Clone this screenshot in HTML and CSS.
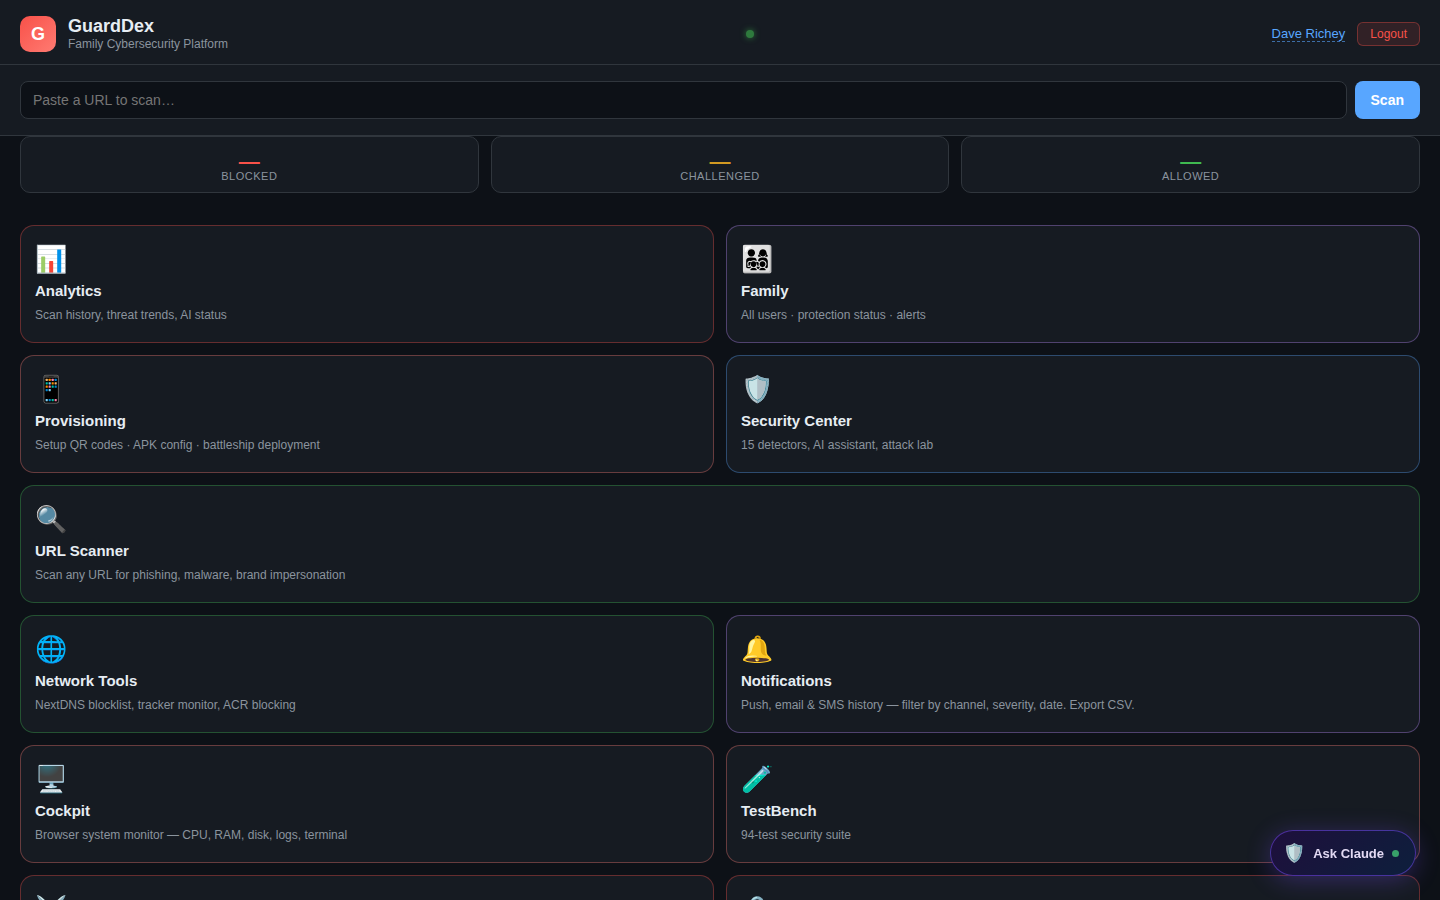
FILE: index.html
```html
<!DOCTYPE html>
<html lang="en">
<head>
    <meta charset="UTF-8">
    <meta name="viewport" content="width=device-width, initial-scale=1.0">
    <title>GuardDex</title>
    <link rel="stylesheet" href="styles.css">
</head>
<body>
    <header class="header">
        <div class="brand">
            <div class="logo">G</div>
            <div>
                <h1 class="brand-name">GuardDex</h1>
                <div class="brand-sub">Family Cybersecurity Platform</div>
            </div>
        </div>
        <span class="status-dot"></span>
        <div class="user">
            <a href="#" class="user-name">Dave Richey</a>
            <button type="button" class="logout">Logout</button>
        </div>
    </header>

    <form class="scan-bar">
        <input type="text" class="scan-input" placeholder="Paste a URL to scan…" aria-label="URL to scan">
        <button type="button" class="scan-btn">Scan</button>
    </form>

    <!-- Stats -->
    <section class="stats">
        <div class="stat">
            <div class="stat-num red">—</div>
            <div class="stat-label">Blocked</div>
        </div>
        <div class="stat">
            <div class="stat-num orange">—</div>
            <div class="stat-label">Challenged</div>
        </div>
        <div class="stat">
            <div class="stat-num green">—</div>
            <div class="stat-label">Allowed</div>
        </div>
    </section>

    <!-- Navigation cards -->
    <main class="grid">
        <a href="#" class="card card-red">
            <div class="card-icon">📊</div>
            <h2 class="card-title">Analytics</h2>
            <p class="card-desc">Scan history, threat trends, AI status</p>
        </a>
        <a href="#" class="card card-purple">
            <div class="card-icon">👨‍👩‍👧‍👦</div>
            <h2 class="card-title">Family</h2>
            <p class="card-desc">All users · protection status · alerts</p>
        </a>
        <a href="#" class="card card-coral">
            <div class="card-icon">📱</div>
            <h2 class="card-title">Provisioning</h2>
            <p class="card-desc">Setup QR codes · APK config · battleship deployment</p>
        </a>
        <a href="#" class="card card-blue">
            <div class="card-icon">🛡️</div>
            <h2 class="card-title">Security Center</h2>
            <p class="card-desc">15 detectors, AI assistant, attack lab</p>
        </a>
        <a href="#" class="card card-green card-wide">
            <div class="card-icon">🔍</div>
            <h2 class="card-title">URL Scanner</h2>
            <p class="card-desc">Scan any URL for phishing, malware, brand impersonation</p>
        </a>
        <a href="#" class="card card-green">
            <div class="card-icon">🌐</div>
            <h2 class="card-title">Network Tools</h2>
            <p class="card-desc">NextDNS blocklist, tracker monitor, ACR blocking</p>
        </a>
        <a href="#" class="card card-purple">
            <div class="card-icon">🔔</div>
            <h2 class="card-title">Notifications</h2>
            <p class="card-desc">Push, email &amp; SMS history — filter by channel, severity, date. Export CSV.</p>
        </a>
        <a href="#" class="card card-coral">
            <div class="card-icon">🖥️</div>
            <h2 class="card-title">Cockpit</h2>
            <p class="card-desc">Browser system monitor — CPU, RAM, disk, logs, terminal</p>
        </a>
        <a href="#" class="card card-coral">
            <div class="card-icon">🧪</div>
            <h2 class="card-title">TestBench</h2>
            <p class="card-desc">94-test security suite</p>
        </a>
        <a href="#" class="card card-red">
            <div class="card-icon">⚔️</div>
        </a>
        <a href="#" class="card card-red">
            <div class="card-icon">🔒</div>
        </a>
    </main>

    <button type="button" class="ask">
        <span class="ask-icon">🛡️</span>
        Ask Claude
        <span class="ask-dot"></span>
    </button>
</body>
</html>
```
FILE: styles.css
```css
:root {
    --bg: #0d1117;
    --card: #161b22;
    --border: #30363d;
    --text: #e6edf3;
    --muted: #8b949e;
    --red: #f85149;
    --orange: #d29922;
    --green: #3fb950;
    --blue: #58a6ff;
}

* {
    margin: 0;
    padding: 0;
    box-sizing: border-box;
}

body {
    height: 100vh;
    overflow: hidden;
    background: var(--bg);
    color: var(--text);
    font-family: "Liberation Sans", Arial, sans-serif;
}

button, input {
    font-family: inherit;
}

/* Header */
.header {
    display: flex;
    align-items: center;
    justify-content: space-between;
    padding: 16px 20px 12px;
    background: var(--card);
    border-bottom: 1px solid var(--border);
}

.brand {
    display: flex;
    align-items: center;
    gap: 12px;
}

.logo {
    display: flex;
    align-items: center;
    justify-content: center;
    width: 36px;
    height: 36px;
    border-radius: 10px;
    background: linear-gradient(135deg, #f85149, #ff7b72);
    color: #fff;
    font-size: 18px;
    font-weight: 700;
}

.brand-name {
    font-size: 18px;
    line-height: 20px;
}

.brand-sub {
    font-size: 12px;
    line-height: 16px;
    color: var(--muted);
}

.status-dot {
    width: 8px;
    height: 8px;
    border-radius: 50%;
    background: var(--green);
    box-shadow: 0 0 6px var(--green);
    opacity: 0.6;
}

.user {
    display: flex;
    align-items: center;
    gap: 12px;
}

.user-name {
    color: var(--blue);
    font-size: 13px;
    line-height: 15px;
    text-decoration: none;
    border-bottom: 1px dashed rgba(88,166,255,0.6);
}

.logout {
    height: 24px;
    padding: 0 12px;
    border: 1px solid rgba(248,81,73,0.35);
    border-radius: 6px;
    background: rgba(248,81,73,0.12);
    color: var(--red);
    font-size: 12px;
}

/* URL scan bar */
.scan-bar {
    display: flex;
    gap: 8px;
    padding: 16px 20px;
    background: var(--card);
    border-bottom: 1px solid var(--border);
}

.scan-input {
    flex: 1;
    min-width: 0;
    height: 38px;
    padding: 0 12px;
    border: 1px solid var(--border);
    border-radius: 8px;
    background: var(--bg);
    color: var(--text);
    font-size: 14px;
}

.scan-btn {
    padding: 0 16px;
    border: none;
    border-radius: 8px;
    background: var(--blue);
    color: #fff;
    font-size: 14px;
    font-weight: 600;
}

/* Stats */
.stats {
    display: grid;
    grid-template-columns: repeat(3, 1fr);
    gap: 12px;
    padding: 0 20px 32px;
}

.stat {
    padding: 14px 10px 10px;
    border: 1px solid var(--border);
    border-radius: 10px;
    background: var(--card);
    text-align: center;
}

.stat-num {
    font-size: 21px;
    line-height: 20px;
    font-weight: 700;
}

.stat-label {
    font-size: 11px;
    line-height: 11px;
    letter-spacing: 0.5px;
    text-transform: uppercase;
    color: var(--muted);
}

.red { color: var(--red); }
.orange { color: var(--orange); }
.green { color: var(--green); }

/* Cards */
.grid {
    display: grid;
    grid-template-columns: 1fr 1fr;
    gap: 12px;
    padding: 0 20px 20px;
}

.card {
    padding: 18px 14px;
    border: 1px solid var(--border);
    border-radius: 14px;
    background: var(--card);
    color: var(--text);
    text-decoration: none;
}

.card-wide { grid-column: 1 / -1; }

.card-red { border-color: rgba(248,81,73,0.35); }
.card-coral { border-color: rgba(255,123,114,0.35); }
.card-purple { border-color: rgba(188,140,255,0.35); }
.card-blue { border-color: rgba(88,166,255,0.35); }
.card-green { border-color: rgba(63,185,80,0.35); }

.card-icon {
    font-size: 26px;
    line-height: 30px;
    margin-bottom: 8px;
}

.card-title {
    font-size: 15px;
    line-height: 18px;
    margin-bottom: 6px;
}

.card-desc {
    font-size: 12px;
    line-height: 18px;
    color: var(--muted);
}

/* Floating chat button */
.ask {
    position: fixed;
    right: 24px;
    bottom: 24px;
    display: flex;
    align-items: center;
    gap: 8px;
    height: 46px;
    padding: 0 16px 0 12px;
    border: 1px solid rgba(124,77,255,0.5);
    border-radius: 23px;
    background: linear-gradient(135deg, #1e0f3c, #0d1f3c);
    box-shadow: 0 4px 24px rgba(124,77,255,0.3);
    color: #e2d9f3;
    font-size: 13px;
    font-weight: 600;
}

.ask-icon {
    font-size: 18px;
}

.ask-dot {
    width: 7px;
    height: 7px;
    border-radius: 50%;
    background: #38a169;
}
```
